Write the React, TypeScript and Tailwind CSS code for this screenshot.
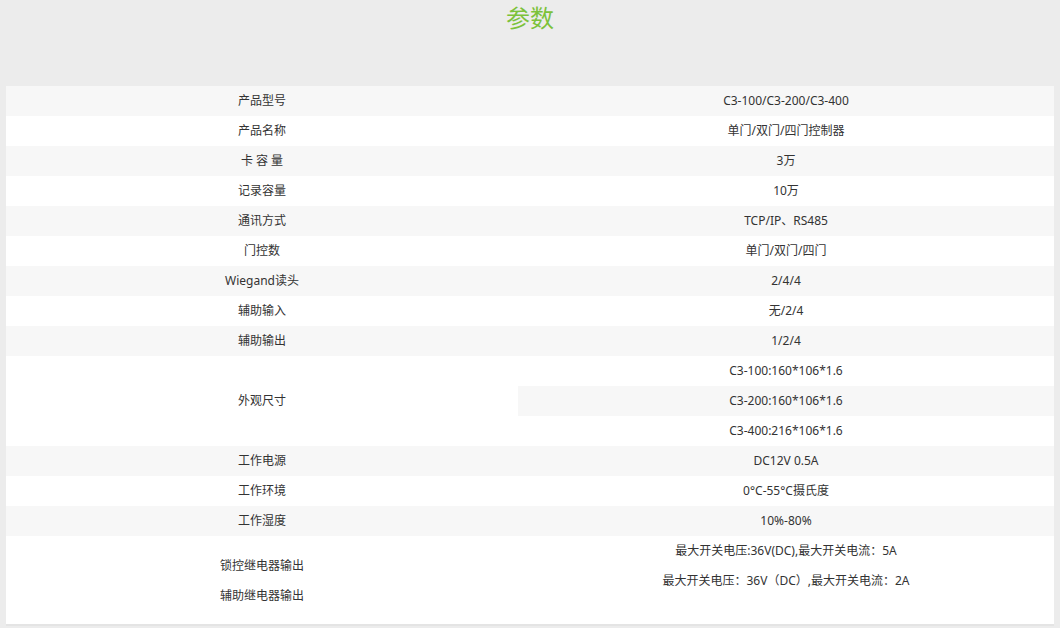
const rows: [string, string][] = [
  ["产品型号", "C3-100/C3-200/C3-400"],
  ["产品名称", "单门/双门/四门控制器"],
  ["卡 容 量", "3万"],
  ["记录容量", "10万"],
  ["通讯方式", "TCP/IP、RS485"],
  ["门控数", "单门/双门/四门"],
  ["Wiegand读头", "2/4/4"],
  ["辅助输入", "无/2/4"],
  ["辅助输出", "1/2/4"],
];

const rows2: [string, string][] = [
  ["工作电源", "DC12V 0.5A"],
  ["工作环境", "0°C-55°C摄氏度"],
  ["工作湿度", "10%-80%"],
];

function Row({ a, b, gray }: { a: string; b: string; gray: boolean }) {
  return (
    <div className={`flex h-[30px] items-center ${gray ? "bg-[#f7f7f7]" : "bg-white"}`}>
      <div className="w-[512px] text-center">{a}</div>
      <div className="flex-1 text-center">{b}</div>
    </div>
  );
}

export default function App() {
  return (
    <div
      className="w-[1060px] h-[628px] bg-[#ececec] text-[12px] text-[#333] overflow-hidden"
      style={{ fontFamily: '"Noto Sans", "Noto Sans CJK SC", sans-serif' }}
    >
      <div className="h-[86px] pt-[2px] text-center text-[24px] leading-[32px] text-[#7cc23a]">参数</div>
      <div className="mx-[6px] border-b-2 border-[#e4e4e4]">
        {rows.map(([a, b], i) => (
          <Row key={a} a={a} b={b} gray={i % 2 === 0} />
        ))}
        <div className="flex bg-white">
          <div className="w-[512px] flex items-center justify-center">外观尺寸</div>
          <div className="flex-1">
            <div className="h-[30px] flex items-center justify-center">C3-100:160*106*1.6</div>
            <div className="h-[30px] flex items-center justify-center bg-[#f7f7f7]">C3-200:160*106*1.6</div>
            <div className="h-[30px] flex items-center justify-center">C3-400:216*106*1.6</div>
          </div>
        </div>
        {rows2.map(([a, b], i) => (
          <Row key={a} a={a} b={b} gray={i % 2 === 0} />
        ))}
        <div className="flex bg-white h-[88px]">
          <div className="w-[512px] pt-[15px] text-center">
            <div className="h-[30px] leading-[30px]">锁控继电器输出</div>
            <div className="h-[30px] leading-[30px]">辅助继电器输出</div>
          </div>
          <div className="flex-1 text-center">
            <div className="h-[30px] leading-[30px]">最大开关电压:36V(DC),最大开关电流：5A</div>
            <div className="h-[30px] leading-[30px]">最大开关电压：36V（DC）,最大开关电流：2A</div>
          </div>
        </div>
      </div>
    </div>
  );
}
